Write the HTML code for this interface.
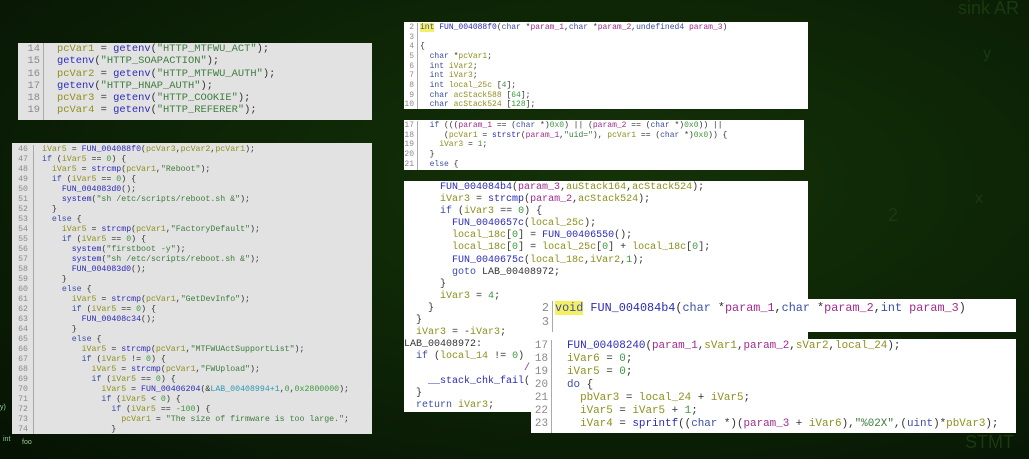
<!DOCTYPE html>
<html><head><meta charset="utf-8"><style>
body{margin:0;width:1029px;height:459px;overflow:hidden;background:radial-gradient(ellipse at 60% 40%,#143208 0%,#0d2406 50%,#061204 100%);position:relative;font-family:"Liberation Mono",monospace}
.p{position:absolute;overflow:hidden}
.g{background:#e2e2e2}.w{background:#fff}
.ln{position:absolute;left:0;top:0;text-align:right;color:#8a8a8a;border-right:1px solid #aaa;white-space:pre}
.c{position:absolute;top:0;white-space:pre;color:#333}
.v{color:#8f8f1f}.f{color:#2a2ab8}.s{color:#3d7d3d}.t{color:#3a4ea8}.pr{color:#a02a8e}.n{color:#3a9a3a}.l{color:#2a9ab0}
.hl{background:#f4f060}
.bg{position:absolute;color:#1a3a0f;font-family:"Liberation Sans",sans-serif}
</style></head><body>
<div class="bg" style="left:958px;top:-2px;font-size:18px">sink AR</div>
<div class="bg" style="left:983px;top:45px;font-size:16px">y</div>
<div class="bg" style="left:888px;top:205px;font-size:18px">2</div>
<div class="bg" style="left:975px;top:190px;font-size:16px">x</div>
<div class="bg" style="left:965px;top:432px;font-size:18px">STMT</div>
<div class="bg" style="left:0;top:404px;font-size:7px;color:#9c9">y)</div>
<div class="bg" style="left:3px;top:436px;font-size:7px;color:#9c9">int</div>
<div class="bg" style="left:22px;top:439px;font-size:7px;color:#9c9">foo</div>

<div class="p g" style="left:18px;top:43px;width:354px;height:77px;font-size:10.4px;line-height:12.3px">
<div class="ln" style="width:22px;padding-right:3px;height:77px">14
15
16
17
18
19</div>
<div class="c" style="left:39px"><span class="v">pcVar1</span> = <span class="f">getenv</span>(<span class="s">"HTTP_MTFWU_ACT"</span>);
<span class="f">getenv</span>(<span class="s">"HTTP_SOAPACTION"</span>);
<span class="v">pcVar2</span> = <span class="f">getenv</span>(<span class="s">"HTTP_MTFWU_AUTH"</span>);
<span class="f">getenv</span>(<span class="s">"HTTP_HNAP_AUTH"</span>);
<span class="v">pcVar3</span> = <span class="f">getenv</span>(<span class="s">"HTTP_COOKIE"</span>);
<span class="v">pcVar4</span> = <span class="f">getenv</span>(<span class="s">"HTTP_REFERER"</span>);</div></div>

<div class="p g" style="left:12px;top:143px;width:360px;height:291px;font-size:8.25px;line-height:10px">
<div class="ln" style="width:16px;padding-right:5px;height:291px;top:2px">46
47
48
49
50
51
52
53
54
55
56
57
58
59
60
61
62
63
64
65
66
67
68
69
70
71
72
73
74</div>
<div class="c" style="left:30px;top:2px"><span class="v">iVar5</span> = <span class="f">FUN_004088f0</span>(<span class="v">pcVar3</span>,<span class="v">pcVar2</span>,<span class="v">pcVar1</span>);
<span class="t">if</span> (<span class="v">iVar5</span> == <span class="n">0</span>) {
  <span class="v">iVar5</span> = <span class="f">strcmp</span>(<span class="v">pcVar1</span>,<span class="s">"Reboot"</span>);
  <span class="t">if</span> (<span class="v">iVar5</span> == <span class="n">0</span>) {
    <span class="f">FUN_004083d0</span>();
    <span class="f">system</span>(<span class="s">"sh /etc/scripts/reboot.sh &amp;"</span>);
  }
  <span class="t">else</span> {
    <span class="v">iVar5</span> = <span class="f">strcmp</span>(<span class="v">pcVar1</span>,<span class="s">"FactoryDefault"</span>);
    <span class="t">if</span> (<span class="v">iVar5</span> == <span class="n">0</span>) {
      <span class="f">system</span>(<span class="s">"firstboot -y"</span>);
      <span class="f">system</span>(<span class="s">"sh /etc/scripts/reboot.sh &amp;"</span>);
      <span class="f">FUN_004083d0</span>();
    }
    <span class="t">else</span> {
      <span class="v">iVar5</span> = <span class="f">strcmp</span>(<span class="v">pcVar1</span>,<span class="s">"GetDevInfo"</span>);
      <span class="t">if</span> (<span class="v">iVar5</span> == <span class="n">0</span>) {
        <span class="f">FUN_00408c34</span>();
      }
      <span class="t">else</span> {
        <span class="v">iVar5</span> = <span class="f">strcmp</span>(<span class="v">pcVar1</span>,<span class="s">"MTFWUActSupportList"</span>);
        <span class="t">if</span> (<span class="v">iVar5</span> != <span class="n">0</span>) {
          <span class="v">iVar5</span> = <span class="f">strcmp</span>(<span class="v">pcVar1</span>,<span class="s">"FWUpload"</span>);
          <span class="t">if</span> (<span class="v">iVar5</span> == <span class="n">0</span>) {
            <span class="v">iVar5</span> = <span class="f">FUN_00406204</span>(&amp;<span class="l">LAB_00408994+1</span>,<span class="n">0</span>,<span class="n">0x2800000</span>);
            <span class="t">if</span> (<span class="v">iVar5</span> &lt; <span class="n">0</span>) {
              <span class="t">if</span> (<span class="v">iVar5</span> == <span class="n">-100</span>) {
                <span class="v">pcVar1</span> = <span class="s">"The size of firmware is too large."</span>;
              }</div></div>

<div class="p w" style="left:404px;top:22px;width:404px;height:87px;font-size:8px;line-height:9.65px">
<div class="ln" style="width:10px;padding-right:3px;height:87px;top:1px">2
3
4
5
6
7
8
9
10</div>
<div class="c" style="left:16px;top:1px"><span class="t hl">int</span> <span class="f">FUN_004088f0</span>(<span class="t">char</span> *<span class="pr">param_1</span>,<span class="t">char</span> *<span class="pr">param_2</span>,<span class="t">undefined4</span> <span class="pr">param_3</span>)

{
  <span class="t">char</span> *<span class="v">pcVar1</span>;
  <span class="t">int</span> <span class="v">iVar2</span>;
  <span class="t">int</span> <span class="v">iVar3</span>;
  <span class="t">int</span> <span class="v">local_25c</span> [<span class="n">4</span>];
  <span class="t">char</span> <span class="v">acStack588</span> [<span class="n">64</span>];
  <span class="t">char</span> <span class="v">acStack524</span> [<span class="n">128</span>];</div></div>

<div class="p w" style="left:404px;top:120px;width:400px;height:50px;font-size:8px;line-height:9.7px">
<div class="ln" style="width:10px;padding-right:3px;height:50px;top:1px">17
18
19
20
21</div>
<div class="c" style="left:16px;top:1px">  <span class="t">if</span> (((<span class="pr">param_1</span> == (<span class="t">char</span> *)<span class="n">0x0</span>) || (<span class="pr">param_2</span> == (<span class="t">char</span> *)<span class="n">0x0</span>)) ||
     (<span class="v">pcVar1</span> = <span class="f">strstr</span>(<span class="pr">param_1</span>,<span class="s">"uid="</span>), <span class="v">pcVar1</span> == (<span class="t">char</span> *)<span class="n">0x0</span>)) {
    <span class="v">iVar3</span> = <span class="n">1</span>;
  }
  <span class="t">else</span> {</div></div>

<div class="p w" style="left:404px;top:181px;width:404px;height:231px;font-size:10px;line-height:12.1px">
<div class="c" style="left:0;top:1px">      <span class="f">FUN_004084b4</span>(<span class="pr">param_3</span>,<span class="v">auStack164</span>,<span class="v">acStack524</span>);
      <span class="v">iVar3</span> = <span class="f">strcmp</span>(<span class="pr">param_2</span>,<span class="v">acStack524</span>);
      <span class="t">if</span> (<span class="v">iVar3</span> == <span class="n">0</span>) {
        <span class="f">FUN_0040657c</span>(<span class="v">local_25c</span>);
        <span class="v">local_18c</span>[<span class="n">0</span>] = <span class="f">FUN_00406550</span>();
        <span class="v">local_18c</span>[<span class="n">0</span>] = <span class="v">local_25c</span>[<span class="n">0</span>] + <span class="v">local_18c</span>[<span class="n">0</span>];
        <span class="f">FUN_0040675c</span>(<span class="v">local_18c</span>,<span class="v">iVar2</span>,<span class="n">1</span>);
        <span class="t">goto</span> LAB_00408972;
      }
      <span class="v">iVar3</span> = <span class="n">4</span>;
    }
  }
  <span class="v">iVar3</span> = -<span class="v">iVar3</span>;
LAB_00408972:
  <span class="t">if</span> (<span class="v">local_14</span> != <span class="n">0</span>) {
                    <span class="pr">/</span>
    <span class="f">__stack_chk_fail</span>();
  }
  <span class="t">return</span> <span class="v">iVar3</span>;</div></div>

<div class="p w" style="left:531px;top:299px;width:485px;height:33px;font-size:11.8px;line-height:14px">
<div class="ln" style="width:18px;padding-right:3px;height:33px;top:2px">2
3</div>
<div class="c" style="left:24px;top:2px"><span class="t hl">void</span> <span class="f">FUN_004084b4</span>(<span class="t">char</span> *<span class="pr">param_1</span>,<span class="t">char</span> *<span class="pr">param_2</span>,<span class="t">int</span> <span class="pr">param_3</span>)</div></div>

<div class="p w" style="left:531px;top:339px;width:485px;height:94px;font-size:10.9px;line-height:13px">
<div class="ln" style="width:17px;padding-right:3px;height:94px;top:1px">17
18
19
20
21
22
23</div>
<div class="c" style="left:36px;top:1px"><span class="f">FUN_00408240</span>(<span class="pr">param_1</span>,<span class="v">sVar1</span>,<span class="pr">param_2</span>,<span class="v">sVar2</span>,<span class="v">local_24</span>);
<span class="v">iVar6</span> = <span class="n">0</span>;
<span class="v">iVar5</span> = <span class="n">0</span>;
<span class="t">do</span> {
  <span class="v">pbVar3</span> = <span class="v">local_24</span> + <span class="v">iVar5</span>;
  <span class="v">iVar5</span> = <span class="v">iVar5</span> + <span class="n">1</span>;
  <span class="v">iVar4</span> = <span class="f">sprintf</span>((<span class="t">char</span> *)(<span class="pr">param_3</span> + <span class="v">iVar6</span>),<span class="s">"%02X"</span>,(<span class="t">uint</span>)*<span class="v">pbVar3</span>);</div></div>
</body></html>
